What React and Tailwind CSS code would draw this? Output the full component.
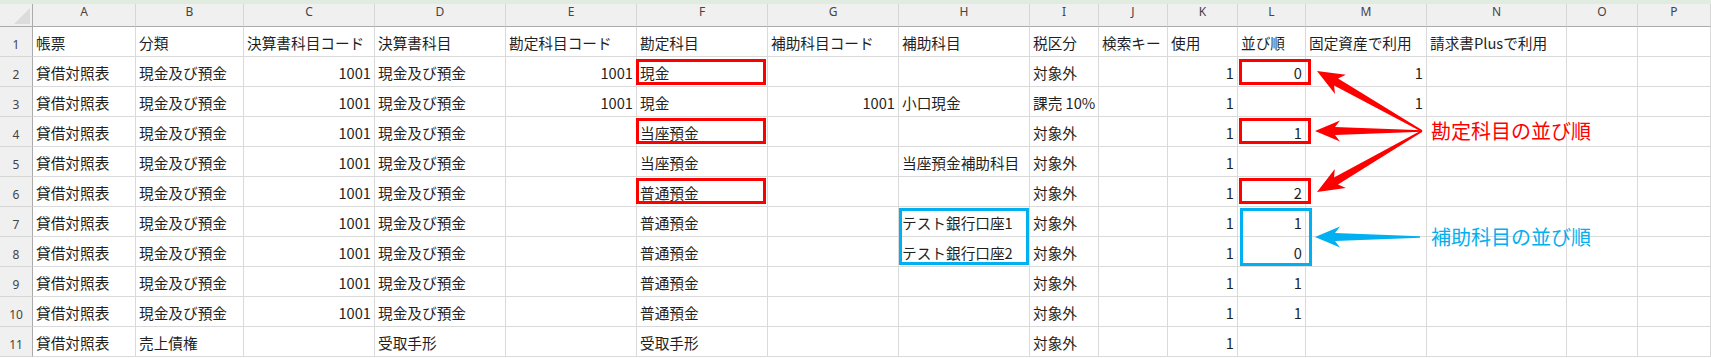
const letters = ["A", "B", "C", "D", "E", "F", "G", "H", "I", "J", "K", "L", "M", "N", "O", "P"];

const base = ["貸借対照表", "現金及び預金", "1001", "現金及び預金"];
const rows = [
  ["帳票", "分類", "決算書科目コード", "決算書科目", "勘定科目コード", "勘定科目", "補助科目コード", "補助科目", "税区分", "検索キー", "使用", "並び順", "固定資産で利用", "請求書Plusで利用", "", ""],
  [...base, "1001", "現金", "", "", "対象外", "", "1", "0", "1", "", "", ""],
  [...base, "1001", "現金", "1001", "小口現金", "課売 10%", "", "1", "", "1", "", "", ""],
  [...base, "", "当座預金", "", "", "対象外", "", "1", "1", "", "", "", ""],
  [...base, "", "当座預金", "", "当座預金補助科目", "対象外", "", "1", "", "", "", "", ""],
  [...base, "", "普通預金", "", "", "対象外", "", "1", "2", "", "", "", ""],
  [...base, "", "普通預金", "", "テスト銀行口座1", "対象外", "", "1", "1", "", "", "", ""],
  [...base, "", "普通預金", "", "テスト銀行口座2", "対象外", "", "1", "0", "", "", "", ""],
  [...base, "", "普通預金", "", "", "対象外", "", "1", "1", "", "", "", ""],
  [...base, "", "普通預金", "", "", "対象外", "", "1", "1", "", "", "", ""],
  ["貸借対照表", "売上債権", "", "受取手形", "", "受取手形", "", "", "対象外", "", "1", "", "", "", "", ""],
];

// tapered block arrow from origin (ox,oy) to tip (tx,ty)
function arrow(ox, oy, tx, ty, head = 27, half = 11, shaft = 4) {
  const dx = ox - tx;
  const dy = oy - ty;
  const len = Math.hypot(dx, dy);
  const ux = dx / len;
  const uy = dy / len;
  const nx = -uy;
  const ny = ux;
  const p = (d, w) => `${(tx + ux * d + nx * w).toFixed(1)},${(ty + uy * d + ny * w).toFixed(1)}`;
  return [
    p(0, 0),
    p(head, half),
    p(head - 5, shaft),
    `${(ox + nx * 0.8).toFixed(1)},${(oy + ny * 0.8).toFixed(1)}`,
    `${(ox - nx * 0.8).toFixed(1)},${(oy - ny * 0.8).toFixed(1)}`,
    p(head - 5, -shaft),
    p(head, -half),
  ].join(" ");
}

function Cell({ value }) {
  const num = /^\d+$/.test(value);
  return (
    <div
      className={`h-[30px] border-r border-b border-[#dadada] flex items-center pt-[2px] px-[3px] whitespace-nowrap text-[14.67px] text-[#1f1f1f] ${
        num ? "justify-end" : "justify-start"
      }`}
    >
      {value}
    </div>
  );
}

export default function App() {
  return (
    <div className="relative w-[1711px] h-[358px] overflow-hidden bg-white [font-family:'Noto_Sans_CJK_JP',sans-serif]">
      <div className="h-[4px] bg-[#e0ece0]" />
      <div className="grid grid-cols-[33px_103px_108px_131px_131px_131px_131px_131px_131px_69px_69px_70px_68px_121px_140px_71px_73px]">
        <div className="relative h-[23px] bg-[#f0f0f0] border-r border-r-[#ababab] border-b border-b-[#ababab]">
          <svg className="absolute left-0 top-0" width="33" height="23">
            <polygon points="30,4 30,20 14,20" fill="#dcdcdc" />
          </svg>
        </div>
        {letters.map((l) => (
          <div
            key={l}
            className="h-[23px] bg-[#f0f0f0] border-r border-r-[#d6d6d6] border-b border-b-[#ababab] flex items-center justify-center pb-[6px] text-[12px] text-[#444] [font-family:'Noto_Sans',sans-serif]"
          >
            {l}
          </div>
        ))}
        {rows.map((row, i) => [
          <div
            key={`n${i}`}
            className="h-[30px] bg-[#f0f0f0] border-r border-r-[#ababab] border-b border-b-[#d6d6d6] flex items-center justify-center pt-[7px] text-[12px] text-[#444] [font-family:'Noto_Sans',sans-serif]"
          >
            {i + 1}
          </div>,
          ...row.map((v, j) => <Cell key={`${i}-${j}`} value={v} />),
        ])}
      </div>

      {/* highlight boxes */}
      <div className="absolute left-[636px] top-[59px] w-[130px] h-[26px] border-[3px] border-[#ff0000]" />
      <div className="absolute left-[636px] top-[118px] w-[130px] h-[26px] border-[3px] border-[#ff0000]" />
      <div className="absolute left-[636px] top-[178px] w-[130px] h-[26px] border-[3px] border-[#ff0000]" />
      <div className="absolute left-[1239px] top-[59px] w-[72px] h-[26px] border-[3px] border-[#ff0000]" />
      <div className="absolute left-[1239px] top-[118px] w-[72px] h-[26px] border-[3px] border-[#ff0000]" />
      <div className="absolute left-[1239px] top-[178px] w-[72px] h-[26px] border-[3px] border-[#ff0000]" />
      <div className="absolute left-[899px] top-[208px] w-[130px] h-[57px] border-[3px] border-[#00b0f0]" />
      <div className="absolute left-[1240px] top-[208px] w-[72px] h-[58px] border-[3px] border-[#00b0f0]" />

      <svg className="absolute left-0 top-0 pointer-events-none" width="1711" height="358">
        <polygon points={arrow(1422, 131, 1317, 71)} fill="#ff0000" />
        <polygon points={arrow(1422, 131, 1315, 131, 25, 10.5)} fill="#ff0000" />
        <polygon points={arrow(1422, 131, 1317, 192)} fill="#ff0000" />
        <polygon points={arrow(1420, 237, 1315, 237, 25, 10.5)} fill="#00b0f0" />
      </svg>

      <div className="absolute left-[1431px] top-[121px] text-[20px] leading-[20px] text-[#ff0000] whitespace-nowrap">
        勘定科目の並び順
      </div>
      <div className="absolute left-[1431px] top-[227px] text-[20px] leading-[20px] text-[#00b0f0] whitespace-nowrap">
        補助科目の並び順
      </div>
    </div>
  );
}
